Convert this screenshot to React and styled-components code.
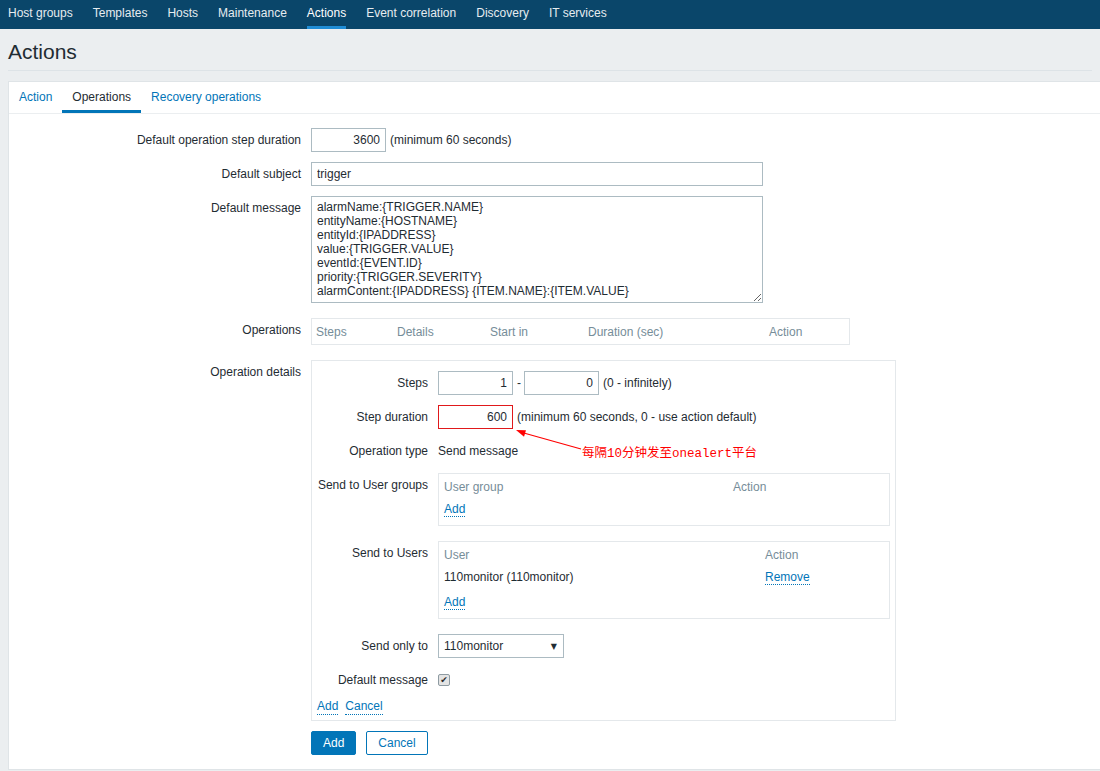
import React from "react";
import styled, { createGlobalStyle } from "styled-components";

const GlobalStyle = createGlobalStyle`
	body {
		margin: 0;
		background: #ebeef0;
		font-family: "Liberation Sans", Arial, sans-serif;
		font-size: 12px;
		color: #1f2c33;
		overflow: hidden;
	}
`;

const navItems = [
	"Host groups",
	"Templates",
	"Hosts",
	"Maintenance",
	"Actions",
	"Event correlation",
	"Discovery",
	"IT services",
];

const tabs = ["Action", "Operations", "Recovery operations"];

const message = `alarmName:{TRIGGER.NAME}
entityName:{HOSTNAME}
entityId:{IPADDRESS}
value:{TRIGGER.VALUE}
eventId:{EVENT.ID}
priority:{TRIGGER.SEVERITY}
alarmContent:{IPADDRESS} {ITEM.NAME}:{ITEM.VALUE}`;

const App = () => {
	return (
		<Page>
			<GlobalStyle />
			<TopNav>
				{navItems.map((item) => (
					<NavItem key={item} $active={item === "Actions"}>
						{item}
					</NavItem>
				))}
			</TopNav>
			<Header>
				<Title>Actions</Title>
			</Header>
			<Panel>
				<TabBar>
					{tabs.map((t) => (
						<TabItem key={t} $active={t === "Operations"}>
							{t}
						</TabItem>
					))}
				</TabBar>
				<Form>
					<FormRow>
						<Label>Default operation step duration</Label>
						<TextInput $w={75} $right readOnly defaultValue='3600' />
						<Hint>(minimum 60 seconds)</Hint>
					</FormRow>
					<FormRow>
						<Label>Default subject</Label>
						<TextInput $w={452} readOnly defaultValue='trigger' />
					</FormRow>
					<FormRow>
						<Label>Default message</Label>
						<TextArea readOnly defaultValue={message} />
					</FormRow>
					<FormRow $mt={5}>
						<Label>Operations</Label>
						<OpsBox>
							<span>Steps</span>
							<span>Details</span>
							<span>Start in</span>
							<span>Duration (sec)</span>
							<span>Action</span>
						</OpsBox>
					</FormRow>
					<FormRow $mt={5}>
						<Label>Operation details</Label>
						<DetailsBox>
							<InnerRow>
								<InnerLabel>Steps</InnerLabel>
								<TextInput $w={75} $right readOnly defaultValue='1' />
								<Dash>-</Dash>
								<TextInput $w={75} $right readOnly defaultValue='0' />
								<Hint>(0 - infinitely)</Hint>
							</InnerRow>
							<InnerRow>
								<InnerLabel>Step duration</InnerLabel>
								<TextInput $w={75} $right $marked readOnly defaultValue='600' />
								<Hint>(minimum 60 seconds, 0 - use action default)</Hint>
							</InnerRow>
							<InnerRow>
								<InnerLabel>Operation type</InnerLabel>
								<PlainValue>Send message</PlainValue>
							</InnerRow>
							<InnerRow $mb={5}>
								<InnerLabel>Send to User groups</InnerLabel>
								<UserBox>
									<TableRow $cols='289px 1fr'>
										<HeadCell>User group</HeadCell>
										<HeadCell>Action</HeadCell>
									</TableRow>
									<TableRow $cols='1fr'>
										<span>
											<LinkText>Add</LinkText>
										</span>
									</TableRow>
								</UserBox>
							</InnerRow>
							<InnerRow $mb={5}>
								<InnerLabel>Send to Users</InnerLabel>
								<UserBox>
									<TableRow $cols='321px 1fr'>
										<HeadCell>User</HeadCell>
										<HeadCell>Action</HeadCell>
									</TableRow>
									<TableRow $cols='321px 1fr'>
										<span>110monitor (110monitor)</span>
										<span>
											<LinkText>Remove</LinkText>
										</span>
									</TableRow>
									<TableRow $cols='1fr' $pt={3}>
										<span>
											<LinkText>Add</LinkText>
										</span>
									</TableRow>
								</UserBox>
							</InnerRow>
							<InnerRow>
								<InnerLabel>Send only to</InnerLabel>
								<SelectBox>
									<span>110monitor</span>
									<SelectArrow>▼</SelectArrow>
								</SelectBox>
							</InnerRow>
							<InnerRow>
								<InnerLabel>Default message</InnerLabel>
								<CheckBox>✔</CheckBox>
							</InnerRow>
							<LinksRow>
								<LinkText>Add</LinkText>
								<LinkText>Cancel</LinkText>
							</LinksRow>
						</DetailsBox>
					</FormRow>
					<ButtonRow>
						<Button $primary>Add</Button>
						<Button>Cancel</Button>
					</ButtonRow>
				</Form>
			</Panel>

			{/* red note drawn on top of the screenshot */}
			<ArrowSvg width='80' height='40' viewBox='0 0 80 40'>
				<line x1='71' y1='29' x2='12' y2='12.5' stroke='#ff0000' strokeWidth='1.2' />
				<polygon points='6,10 16,10.2 14,16.8' fill='#ff0000' />
			</ArrowSvg>
			<Note>每隔10分钟发至onealert平台</Note>
		</Page>
	);
};

export default App;

const Page = styled.div`
	position: relative;
	min-height: 771px;
`;

const TopNav = styled.div`
	height: 29px;
	background: #0a466a;
	display: flex;
	gap: 20px;
	padding-left: 8px;
`;

const NavItem = styled.div`
	height: 29px;
	box-sizing: border-box;
	line-height: 26px;
	white-space: nowrap;
	color: ${(p) => (p.$active ? "#ffffff" : "#e6ecf0")};
	border-bottom: 3px solid ${(p) => (p.$active ? "#1f8dd6" : "transparent")};
`;

const Header = styled.div`
	margin: 0 8px;
	padding: 10px 0 5px;
	border-bottom: 1px solid #dde3e7;
`;

const Title = styled.h1`
	margin: 0;
	font-size: 21px;
	line-height: 26px;
	font-weight: normal;
	color: #1f2c33;
`;

const Panel = styled.div`
	margin: 10px -20px 0 8px;
	background: #ffffff;
	border: 1px solid #dfe4e7;
	padding-bottom: 14px;
`;

const TabBar = styled.div`
	display: flex;
	height: 31px;
	border-bottom: 1px solid #ebeef0;
`;

const TabItem = styled.div`
	padding: 0 10px;
	line-height: 30px;
	height: 31px;
	box-sizing: border-box;
	color: ${(p) => (p.$active ? "#1f2c33" : "#0275b8")};
	border-bottom: 3px solid ${(p) => (p.$active ? "#0275b8" : "transparent")};
`;

const Form = styled.div`
	padding-top: 14px;
	display: flex;
	flex-direction: column;
	gap: 10px;
`;

const FormRow = styled.div`
	display: flex;
	align-items: flex-start;
	margin-top: ${(p) => p.$mt || 0}px;
`;

const Label = styled.div`
	width: 292px;
	flex: none;
	margin-right: 10px;
	text-align: right;
	line-height: 24px;
	white-space: nowrap;
`;

const TextInput = styled.input`
	width: ${(p) => p.$w}px;
	height: 24px;
	box-sizing: border-box;
	border: 1px solid ${(p) => (p.$marked ? "#e0191b" : "#acbbc2")};
	border-radius: 0;
	padding: 0 5px;
	margin: 0;
	font-family: inherit;
	font-size: 12px;
	color: #1f2c33;
	background: #ffffff;
	text-align: ${(p) => (p.$right ? "right" : "left")};
	outline: none;
`;

const Hint = styled.span`
	line-height: 24px;
	margin-left: 4px;
	white-space: nowrap;
`;

const Dash = styled.span`
	line-height: 24px;
	margin: 0 3px 0 4px;
`;

const TextArea = styled.textarea`
	width: 452px;
	height: 107px;
	box-sizing: border-box;
	border: 1px solid #acbbc2;
	border-radius: 0;
	padding: 3px 5px;
	margin: 0;
	font-family: inherit;
	font-size: 12px;
	line-height: 14px;
	color: #1f2c33;
	outline: none;
`;

const OpsBox = styled.div`
	width: 539px;
	height: 27px;
	box-sizing: border-box;
	border: 1px solid #e4e8eb;
	padding: 0 4px;
	display: grid;
	grid-template-columns: 81px 93px 98px 181px 1fr;
	line-height: 26px;
	color: #768d99;
`;

const DetailsBox = styled.div`
	width: 585px;
	box-sizing: border-box;
	border: 1px solid #e4e8eb;
	padding: 10px 5px 5px;
	display: flex;
	flex-direction: column;
	gap: 10px;
`;

const InnerRow = styled.div`
	display: flex;
	align-items: flex-start;
	margin-bottom: ${(p) => p.$mb || 0}px;
`;

const InnerLabel = styled.div`
	width: 111px;
	flex: none;
	margin-right: 10px;
	text-align: right;
	line-height: 24px;
	white-space: nowrap;
`;

const PlainValue = styled.span`
	line-height: 24px;
`;

const UserBox = styled.div`
	width: 452px;
	box-sizing: border-box;
	border: 1px solid #e4e8eb;
	padding: 2px 5px 5px;
`;

const TableRow = styled.div`
	display: grid;
	grid-template-columns: ${(p) => p.$cols};
	line-height: 22px;
	padding-top: ${(p) => p.$pt || 0}px;
`;

const HeadCell = styled.span`
	color: #768d99;
`;

const LinkText = styled.span`
	color: #0275b8;
	border-bottom: 1px dotted #0275b8;
	cursor: pointer;
`;

const SelectBox = styled.div`
	width: 126px;
	height: 24px;
	box-sizing: border-box;
	border: 1px solid #acbbc2;
	padding: 0 6px 0 5px;
	display: flex;
	align-items: center;
	justify-content: space-between;
`;

const SelectArrow = styled.span`
	font-family: "DejaVu Sans", sans-serif;
	font-size: 8px;
	color: #1f2c33;
`;

const CheckBox = styled.span`
	width: 12px;
	height: 12px;
	margin-top: 6px;
	box-sizing: border-box;
	border: 1px solid #8e9ba2;
	border-radius: 2px;
	background: #e4e4e4;
	display: flex;
	align-items: center;
	justify-content: center;
	font-family: "DejaVu Sans", sans-serif;
	font-size: 9px;
	line-height: 1;
	color: #2b2b2b;
`;

const LinksRow = styled.div`
	display: flex;
	gap: 7px;
	margin-top: -4px;
	line-height: 16px;
`;

const ButtonRow = styled.div`
	display: flex;
	gap: 10px;
	padding-left: 302px;
`;

const Button = styled.button`
	height: 24px;
	box-sizing: border-box;
	padding: 0 11px;
	margin: 0;
	border: 1px solid #0275b8;
	border-radius: 2px;
	background: ${(p) => (p.$primary ? "#0275b8" : "#ffffff")};
	color: ${(p) => (p.$primary ? "#ffffff" : "#0275b8")};
	font-family: inherit;
	font-size: 12px;
	cursor: pointer;
`;

const ArrowSvg = styled.svg`
	position: absolute;
	left: 510px;
	top: 420px;
`;

const Note = styled.div`
	position: absolute;
	left: 582px;
	top: 446px;
	color: #ff0000;
	font-family: "Liberation Mono", "Noto Sans CJK SC", monospace;
	font-size: 12.5px;
	line-height: 16px;
	white-space: nowrap;
`;
